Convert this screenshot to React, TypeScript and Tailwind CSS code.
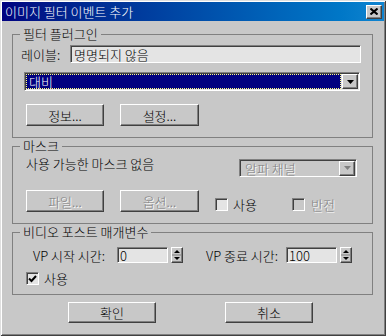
import React from 'react';

const raised =
  'border border-t-white border-l-white border-r-[#404040] border-b-[#404040] shadow-[inset_-1px_-1px_0_#808080] bg-[#c8c8c8]';
const sunken =
  'border border-t-[#808080] border-l-[#808080] border-r-white border-b-white shadow-[inset_1px_1px_0_#404040]';
const disabledText = 'text-[#808080] [text-shadow:1px_1px_0_#fff]';

function Group({ title, className, children }: { title: string; className?: string; children: React.ReactNode }) {
  return (
    <fieldset className={`ml-[12px] mr-[13px] border border-[#808080] ${className ?? ''}`}>
      <legend className="ml-[7px] px-[3px] leading-[14px]">{title}</legend>
      {children}
    </fieldset>
  );
}

function Button({ label, className, disabled }: { label: string; className: string; disabled?: boolean }) {
  return (
    <div className={`${raised} flex items-center justify-center leading-none ${disabled ? disabledText : ''} ${className}`}>
      {label}
    </div>
  );
}

function ArrowButton({ disabled }: { disabled?: boolean }) {
  return (
    <div className={`${raised} w-[16px] h-[15px] flex items-center justify-center`}>
      <svg width="7" height="4" viewBox="0 0 7 4">
        <polygon points="0,0 7,0 3.5,4" fill={disabled ? '#808080' : '#000'} />
      </svg>
    </div>
  );
}

function Checkbox({ checked, disabled }: { checked?: boolean; disabled?: boolean }) {
  return (
    <div
      className={`${sunken} w-[13px] h-[13px] flex items-center justify-center ${disabled ? 'bg-[#c8c8c8]' : 'bg-[#e4e4e4]'}`}
    >
      {checked && (
        <svg width="9" height="8" viewBox="0 0 9 8">
          <polyline points="1,3.5 3.5,6 8,1" fill="none" stroke="#000" strokeWidth="2" />
        </svg>
      )}
    </div>
  );
}

function Spinner() {
  return (
    <div className={`${raised} w-[12px] h-[16px] flex flex-col items-center justify-center`}>
      <svg width="10" height="14" viewBox="0 0 10 14">
        <polygon points="2,5 8,5 5,2" fill="#000" />
        <line x1="0" y1="7" x2="10" y2="7" stroke="#808080" />
        <polygon points="2,9 8,9 5,12" fill="#000" />
      </svg>
    </div>
  );
}

export default function App() {
  return (
    <div className="relative w-[386px] h-[336px] overflow-hidden bg-[#c8c8c8] text-[13px] font-light text-black font-['Noto_Sans_CJK_KR',sans-serif] shadow-[inset_1px_1px_0_#dfdfdf,inset_-1px_-1px_0_#404040,inset_2px_2px_0_#fff,inset_-2px_-2px_0_#808080]">
      {/* Title bar */}
      <div className="mx-[2px] mt-[2px] h-[19px] bg-gradient-to-r from-[#000080] to-[#1084d0] flex items-center justify-between">
        <span className="ml-[3px] text-white text-[13px] leading-none">이미지 필터 이벤트 추가</span>
        <div className={`${raised} mr-[2px] w-[16px] h-[14px] flex items-center justify-center`}>
          <svg width="8" height="7" viewBox="0 0 8 7">
            <path d="M0.5 0.5 L7.5 6.5 M7.5 0.5 L0.5 6.5" stroke="#000" strokeWidth="2" />
          </svg>
        </div>
      </div>

      {/* Filter plugin */}
      <Group title="필터 플러그인" className="mt-[6px]">
        <div className="flex items-center mt-[4px] h-[18px]">
          <span className="ml-[8px] w-[49px] leading-none">레이블:</span>
          <div className={`${sunken} w-[291px] h-[18px] bg-[#e4e4e4] flex items-center pl-[3px] leading-none`}>
            명명되지 않음
          </div>
        </div>
        <div className={`${sunken} mt-[9px] ml-[11px] w-[336px] h-[19px] bg-[#e4e4e4] flex items-center p-[1px]`}>
          <div className="flex-1 h-[15px] bg-[#000080] outline outline-1 outline-dotted outline-[#ffff80] -outline-offset-1 text-white leading-none flex items-center pl-[3px] mr-[1px]">
            대비
          </div>
          <ArrowButton />
        </div>
        <div className="flex gap-[16px] mt-[13px] ml-[13px] mb-[11px]">
          <Button label="정보..." className="w-[78px] h-[22px]" />
          <Button label="설정..." className="w-[79px] h-[22px]" />
        </div>
      </Group>

      {/* Mask */}
      <Group title="마스크" className="mt-[1px]">
        <div className="flex items-start mt-[6px] h-[18px]">
          <span className="ml-[13px] -mt-[2px] leading-[14px]">사용 가능한 마스크 없음</span>
          <div className={`${sunken} ml-auto mr-[15px] w-[118px] h-[18px] flex items-center pl-[3px] p-[1px]`}>
            <span className={`flex-1 leading-none pl-[2px] ${disabledText}`}>알파 채널</span>
            <ArrowButton disabled />
          </div>
        </div>
        <div className="flex mt-[13px] ml-[13px] mb-[11px]">
          <Button label="파일..." className="w-[78px] h-[22px]" disabled />
          <Button label="옵션..." className="ml-[16px] w-[79px] h-[22px]" disabled />
          <div className="ml-[16px] mt-[8px] w-[77px] flex items-center gap-[5px] h-[13px]">
            <Checkbox />
            <span className="leading-none">사용</span>
          </div>
          <div className="mt-[8px] flex items-center gap-[6px] h-[13px]">
            <Checkbox disabled />
            <span className={`leading-none ${disabledText}`}>반전</span>
          </div>
        </div>
      </Group>

      {/* Video post params */}
      <Group title="비디오 포스트 매개변수" className="mt-[1px]">
        <div className="flex items-center mt-[8px] h-[16px]">
          <span className="ml-[20px] w-[84px] leading-none">VP 시작 시간:</span>
          <div className={`${sunken} w-[51px] h-[16px] bg-[#e4e4e4] flex items-center pl-[2px] leading-none`}>0</div>
          <div className="ml-[3px]">
            <Spinner />
          </div>
          <span className="ml-[23px] w-[80px] leading-none">VP 종료 시간:</span>
          <div className={`${sunken} w-[51px] h-[16px] bg-[#e4e4e4] flex items-center pl-[2px] leading-none`}>100</div>
          <div className="ml-[3px]">
            <Spinner />
          </div>
        </div>
        <div className="flex items-center gap-[5px] mt-[9px] ml-[13px] mb-[9px] h-[13px]">
          <Checkbox checked />
          <span className="leading-none">사용</span>
        </div>
      </Group>

      {/* Footer buttons */}
      <div className="flex mt-[7px] ml-[68px] gap-[69px]">
        <Button label="확인" className="w-[88px] h-[21px]" />
        <Button label="취소" className="w-[88px] h-[21px]" />
      </div>
    </div>
  );
}
